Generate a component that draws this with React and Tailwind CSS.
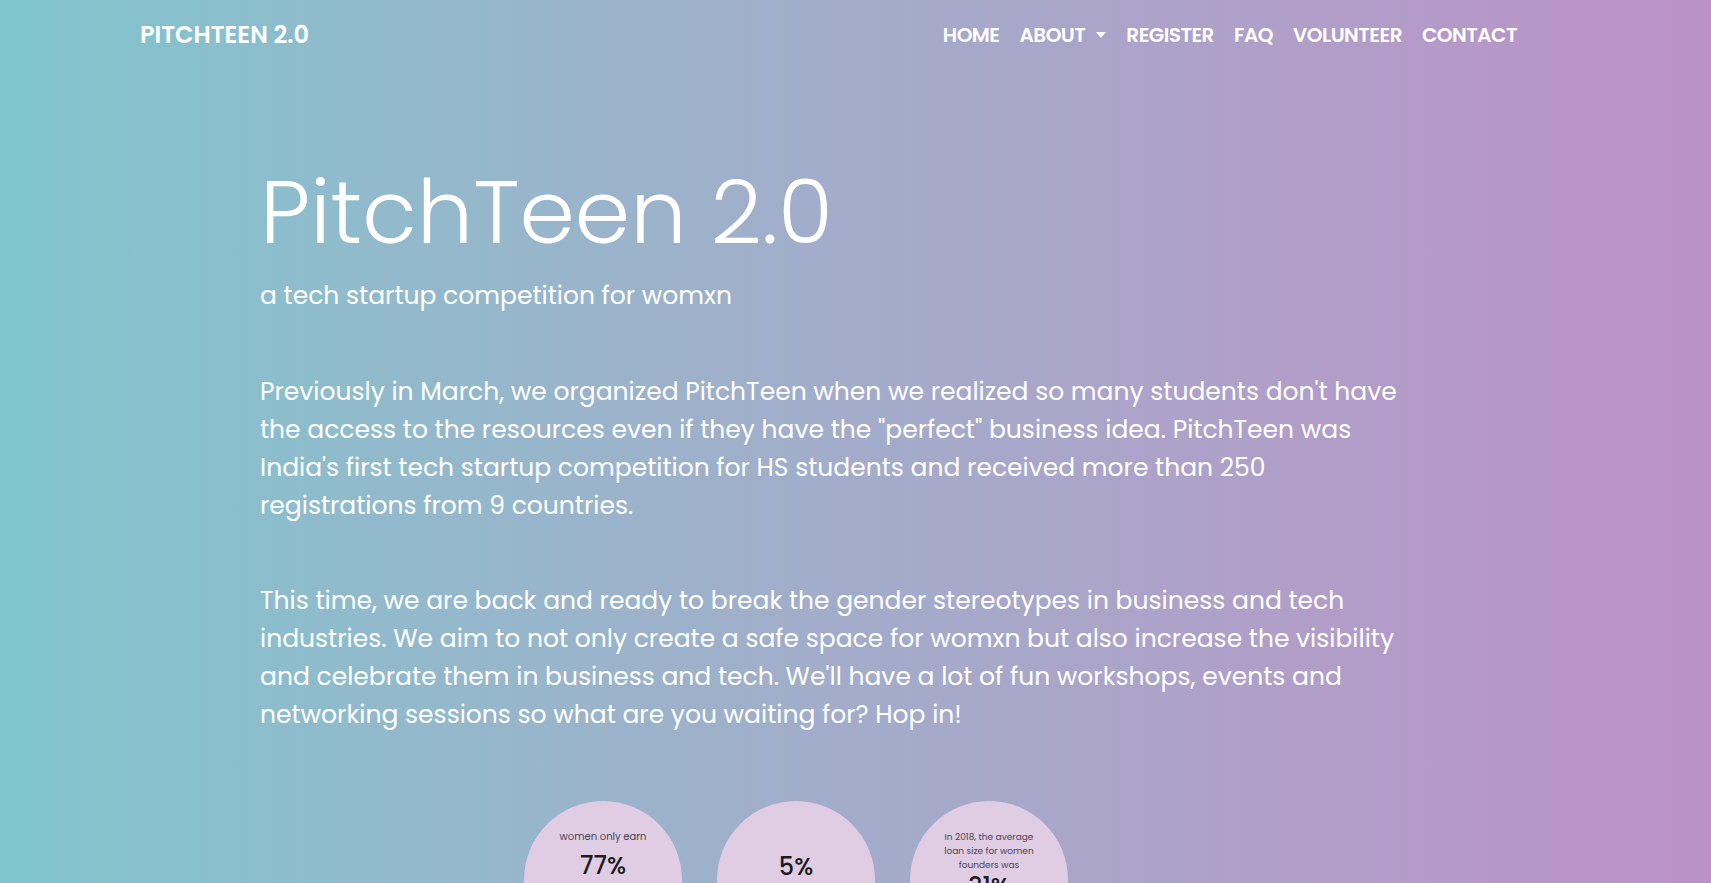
const navLinks = ['HOME', 'ABOUT', 'REGISTER', 'FAQ', 'VOLUNTEER', 'CONTACT']

function StatCircle({ caption, value, small }) {
  return (
    <div className="w-[158px] h-[158px] shrink-0 rounded-full bg-[#e0cde3] flex flex-col items-center pt-[29px]">
      {caption && (
        <p
          className={
            small
              ? 'w-[100px] text-center text-[9px] leading-[14px] text-[#4b4452]'
              : 'text-center text-[10px] leading-[14px] text-[#4b4452]'
          }
        >
          {caption}
        </p>
      )}
      <p className={`${caption ? (small ? 'mt-[3px]' : 'mt-[10px]') : 'mt-[25px]'} text-[24px] font-medium leading-none text-[#1d1a20]`}>
        {value}
      </p>
    </div>
  )
}

export default function App() {
  return (
    <div
      className="min-h-[1200px] w-full bg-gradient-to-r from-[#7fc5cd] to-[#bb91c7] text-white"
      style={{ fontFamily: 'Poppins, Inter, "Noto Sans", sans-serif' }}
    >
      <nav className="h-[70px] pl-[140px] pr-[194px] flex items-center justify-between">
        <a className="text-[24px] font-semibold">PITCHTEEN 2.0</a>
        <ul className="flex items-center gap-[20px] text-[20px] font-semibold tracking-[-0.5px]">
          {navLinks.map((label) => (
            <li key={label} className="flex items-center">
              {label}
              {label === 'ABOUT' && (
                <span className="ml-[11px] w-0 h-0 border-l-[5px] border-r-[5px] border-t-[6px] border-l-transparent border-r-transparent border-t-white" />
              )}
            </li>
          ))}
        </ul>
      </nav>

      <main className="pl-[260px] pt-[98px]">
        <h1 className="text-[89px] font-light leading-none">PitchTeen 2.0</h1>
        <p className="mt-[24px] text-[25px] leading-[30px]">a tech startup competition for womxn</p>

        <div className="mt-[62px] w-[1150px] text-[25px] leading-[38px]">
          <p>
            Previously in March, we organized PitchTeen when we realized so many students don't have the
            access to the resources even if they have the "perfect" business idea. PitchTeen was India's
            first tech startup competition for HS students and received more than 250 registrations from 9
            countries.
          </p>
          <p className="mt-[57px]">
            This time, we are back and ready to break the gender stereotypes in business and tech
            industries. We aim to not only create a safe space for womxn but also increase the visibility
            and celebrate them in business and tech. We'll have a lot of fun workshops, events and
            networking sessions so what are you waiting for? Hop in!
          </p>
        </div>

        <div className="mt-[67px] ml-[264px] flex gap-[35px]">
          <StatCircle caption="women only earn" value="77%" />
          <StatCircle value="5%" />
          <StatCircle small caption="In 2018, the average loan size for women founders was" value="31%" />
        </div>
      </main>
    </div>
  )
}
